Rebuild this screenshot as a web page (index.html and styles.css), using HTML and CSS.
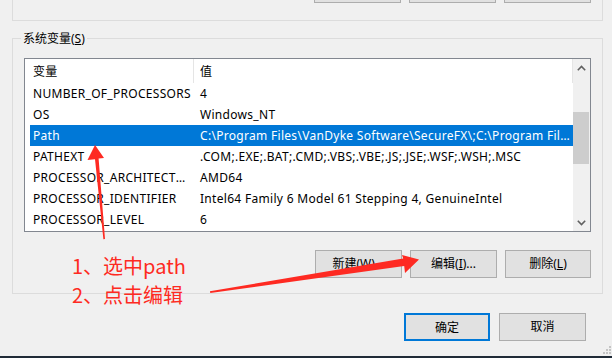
FILE: index.html
```html
<!DOCTYPE html>
<html lang="zh-CN">
<head>
<meta charset="utf-8">
<title>环境变量</title>
<link rel="stylesheet" href="styles.css">
</head>
<body>
<div class="dialog">
  <div class="group group-top">
    <div class="btn-row top-btns">
      <button class="btn" aria-label="新建(N)..."></button>
      <button class="btn" aria-label="编辑(E)..."></button>
      <button class="btn" aria-label="删除(D)"></button>
    </div>
  </div>

  <fieldset class="group sys">
    <legend>系统变量(<u>S</u>)</legend>
    <div class="list">
      <div class="list-body">
        <div class="row head"><span class="c1">变量</span><span class="c2">值</span></div>
        <div class="row"><span class="c1">NUMBER_OF_PROCESSORS</span><span class="c2">4</span></div>
        <div class="row"><span class="c1">OS</span><span class="c2">Windows_NT</span></div>
        <div class="row sel"><span class="c1">Path</span><span class="c2">C:\Program Files\VanDyke Software\SecureFX\;C:\Program Files\VanDyke Software\SecureCRT\;C:\Windows\system32</span></div>
        <div class="row"><span class="c1">PATHEXT</span><span class="c2">.COM;.EXE;.BAT;.CMD;.VBS;.VBE;.JS;.JSE;.WSF;.WSH;.MSC</span></div>
        <div class="row"><span class="c1">PROCESSOR_ARCHITECTURE</span><span class="c2">AMD64</span></div>
        <div class="row"><span class="c1">PROCESSOR_IDENTIFIER</span><span class="c2">Intel64 Family 6 Model 61 Stepping 4, GenuineIntel</span></div>
        <div class="row"><span class="c1">PROCESSOR_LEVEL</span><span class="c2">6</span></div>
      </div>
      <div class="scrollbar">
        <div class="sb-btn">
          <svg width="9" height="6" viewBox="0 0 9 6"><path d="M0.8 5.2 L4.5 1.5 L8.2 5.2" fill="none" stroke="#606060" stroke-width="1.6"/></svg>
        </div>
        <div class="sb-track"><div class="sb-thumb"></div></div>
        <div class="sb-btn">
          <svg width="9" height="6" viewBox="0 0 9 6"><path d="M0.8 0.8 L4.5 4.5 L8.2 0.8" fill="none" stroke="#606060" stroke-width="1.6"/></svg>
        </div>
      </div>
    </div>
    <div class="btn-row list-btns">
      <button class="btn">新建(<u>W</u>)...</button>
      <button class="btn">编辑(<u>I</u>)...</button>
      <button class="btn">删除(<u>L</u>)</button>
    </div>
  </fieldset>

  <div class="btn-row dlg-btns">
    <button class="btn primary">确定</button>
    <button class="btn">取消</button>
  </div>
</div>
<div class="taskbar"></div>

<div class="grip">
  <svg width="10" height="10" viewBox="0 0 10 10">
    <rect x="7" y="1" width="2" height="2" fill="#c4c4c4"/>
    <rect x="4" y="4" width="2" height="2" fill="#c4c4c4"/>
    <rect x="7" y="4" width="2" height="2" fill="#c4c4c4"/>
    <rect x="1" y="7" width="2" height="2" fill="#c4c4c4"/>
    <rect x="4" y="7" width="2" height="2" fill="#c4c4c4"/>
    <rect x="7" y="7" width="2" height="2" fill="#c4c4c4"/>
  </svg>
</div>

<div class="note">
  <div>1、选中path</div>
  <div>2、点击编辑</div>
</div>

<svg class="arrows" width="612" height="358" viewBox="0 0 612 358">
  <polygon fill="#fe2a22" points="95,145 104,158 98.6,158.6 105,239 103.4,239.2 95,159.2 87.5,160"/>
  <polygon fill="#fe2a22" points="419,259.5 405,273 404.2,266 210.3,293 209.9,291.3 403.2,258.6 402,255"/>
</svg>
</body>
</html>
```

FILE: styles.css
```css
* {
  box-sizing: border-box;
}

html, body {
  margin: 0;
  padding: 0;
}

body {
  width: 612px;
  height: 358px;
  overflow: hidden;
  position: relative;
  background: #f0f0f0;
  font-family: "Noto Sans", "Noto Sans CJK SC", sans-serif;
  font-size: 12px;
  color: #000;
}

.dialog {
  height: 356px;
  display: flex;
  flex-direction: column;
}

.group {
  border: 1px solid #dcdcdc;
}

.group-top {
  margin: 0 9px 0 12px;
  height: 21px;
  border-top: none;
}

.btn-row {
  display: flex;
  justify-content: flex-end;
  gap: 8px;
}

.top-btns {
  margin-top: -25px;
  padding-right: 11px;
}

.btn {
  width: 87px;
  height: 28px;
  padding: 0;
  margin: 0;
  background: #e1e1e1;
  border: 1px solid #adadad;
  font-family: "Noto Sans", "Noto Sans CJK SC", sans-serif;
  font-size: 12px;
  color: #000;
  line-height: 26px;
}

.btn.primary {
  border: 2px solid #0078d7;
  width: 86px;
}

.sys {
  margin: 9px 9px 0 12px;
  padding: 12px 11px 15px 11px;
  min-width: 0;
}

.sys legend {
  padding: 0 2px;
  margin-left: -3px;
  line-height: 16px;
  height: 16px;
  position: relative;
  top: 1px;
}

.list {
  display: flex;
  height: 174px;
  border: 1px solid #828790;
  background: #fff;
}

.list-body {
  flex: 1;
  min-width: 0;
  display: flex;
  flex-direction: column;
}

.row {
  display: flex;
  height: 21px;
  margin-left: 5px;
  align-items: center;
  white-space: nowrap;
  letter-spacing: 0.3px;
}

.row .c1 {
  width: 164px;
  flex: none;
  padding: 0 1px 0 3px;
  overflow: hidden;
  text-overflow: ellipsis;
}

.row .c2 {
  flex: 1;
  min-width: 0;
  padding: 0 3px 0 6px;
  overflow: hidden;
  text-overflow: ellipsis;
}

.row.head {
  height: 24px;
  align-items: stretch;
  border-right: 1px solid #e5e5e5;
}

.row.head span {
  display: flex;
  align-items: center;
}

.row.head .c1 {
  border-right: 1px solid #e5e5e5;
}

.row.sel {
  background: #0078d7;
  color: #fff;
}

.scrollbar {
  width: 17px;
  flex: none;
  background: #f0f0f0;
  display: flex;
  flex-direction: column;
}

.sb-btn {
  height: 17px;
  display: flex;
  align-items: center;
  justify-content: center;
}

.sb-track {
  flex: 1;
  padding: 36px 1px 0 0;
}

.sb-thumb {
  height: 52px;
  background: #cdcdcd;
}

.list-btns {
  margin-top: 18px;
}

.list-btns .btn:last-child {
  width: 86px;
}

.dlg-btns {
  margin-top: 19px;
  padding-right: 26px;
  gap: 9px;
}

.taskbar {
  height: 2px;
  background: #202b37;
}

.grip {
  position: absolute;
  right: 0;
  bottom: 3px;
  width: 10px;
  height: 10px;
  line-height: 0;
}

.note {
  position: absolute;
  left: 72px;
  top: 251px;
  font-family: "Noto Sans CJK SC", sans-serif;
  font-size: 20px;
  line-height: 29px;
  color: #fe2a22;
}

.arrows {
  position: absolute;
  left: 0;
  top: 0;
  pointer-events: none;
}
```
